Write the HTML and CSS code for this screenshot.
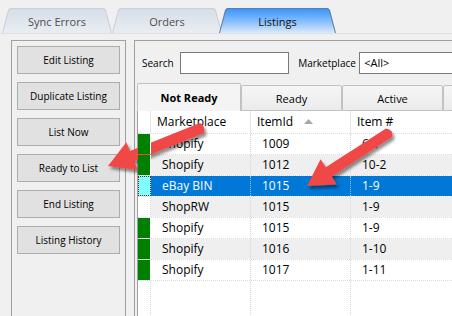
FILE: index.html
```html
<!DOCTYPE html>
<html lang="en">
<head>
  <meta charset="UTF-8" />
  <title>Listings</title>
  <link rel="stylesheet" href="styles.css">
</head>
<body>
  <div class="topbar">
    <div class="tab"><div class="tab-face">Sync Errors</div></div>
    <div class="tab"><div class="tab-face">Orders</div></div>
    <div class="tab active"><div class="tab-face">Listings</div></div>
  </div>

  <div class="main">
    <div class="actions">
      <button>Edit Listing</button>
      <button>Duplicate Listing</button>
      <button>List Now</button>
      <button>Ready to List</button>
      <button>End Listing</button>
      <button>Listing History</button>
    </div>

    <div class="group">
      <div class="filters">
        <label class="lbl-search">Search</label>
        <input type="text" class="search" />
        <label class="lbl-market">Marketplace</label>
        <div class="select">&lt;All&gt;</div>
      </div>

      <div class="subtabs">
        <div class="subtab selected">Not Ready</div>
        <div class="subtab">Ready</div>
        <div class="subtab">Active</div>
        <div class="subtab"></div>
      </div>

      <div class="grid">
        <div class="row head">
          <div class="cell ind"></div>
          <div class="cell">Marketplace</div>
          <div class="cell">ItemId <svg class="sort" width="9" height="5" viewBox="0 0 9 5"><path d="M0 5 L4.5 0 L9 5 Z" fill="#a8a8a8"/></svg></div>
          <div class="cell">Item #</div>
        </div>
        <div class="row">
          <div class="cell ind green"></div>
          <div class="cell">Shopify</div>
          <div class="cell">1009</div>
          <div class="cell">6-1</div>
        </div>
        <div class="row alt">
          <div class="cell ind green"></div>
          <div class="cell">Shopify</div>
          <div class="cell">1012</div>
          <div class="cell">10-2</div>
        </div>
        <div class="row sel">
          <div class="cell ind focus"></div>
          <div class="cell">eBay BIN</div>
          <div class="cell">1015</div>
          <div class="cell">1-9</div>
        </div>
        <div class="row alt">
          <div class="cell ind blank"></div>
          <div class="cell">ShopRW</div>
          <div class="cell">1015</div>
          <div class="cell">1-9</div>
        </div>
        <div class="row">
          <div class="cell ind green"></div>
          <div class="cell">Shopify</div>
          <div class="cell">1015</div>
          <div class="cell">1-9</div>
        </div>
        <div class="row alt">
          <div class="cell ind green"></div>
          <div class="cell">Shopify</div>
          <div class="cell">1016</div>
          <div class="cell">1-10</div>
        </div>
        <div class="row">
          <div class="cell ind green"></div>
          <div class="cell">Shopify</div>
          <div class="cell">1017</div>
          <div class="cell">1-11</div>
        </div>
        <div class="row filler">
          <div class="cell ind"></div>
          <div class="cell"></div>
          <div class="cell"></div>
          <div class="cell"></div>
        </div>
      </div>
    </div>
  </div>

  <!-- annotation arrows -->
  <svg class="arrows" width="452" height="316" viewBox="0 0 452 316">
    <defs>
      <filter id="shadow" x="-20%" y="-20%" width="140%" height="150%">
        <feDropShadow dx="2" dy="3" stdDeviation="1.8" flood-color="#000" flood-opacity="0.45"/>
      </filter>
    </defs>
    <g fill="#f04646" filter="url(#shadow)">
      <path d="M108 166 L137.8 170.1 L134.2 161.3 L204.1 133.1 Q205.5 126 199.9 122.9 L130 151.1 L126.4 142.3 Z"/>
      <path d="M307 186 L337 184.4 L331.8 176.4 L392 137 Q394 129.5 386 128.4 L325.8 167.2 L320.6 159.2 Z"/>
    </g>
  </svg>
</body>
</html>
```

FILE: styles.css
```css
body {
  margin: 0;
  width: 452px;
  height: 316px;
  overflow: hidden;
  position: relative;
  background-color: #f0f0f0;
  font-family: 'Open Sans', sans-serif;
  color: #000;
}

/* top tabs */
.topbar {
  display: flex;
  height: 25px;
  padding: 8px 0 0 2px;
  border-bottom: 1px solid #dbe1e8;
}

.tab {
  width: 110px;
  height: 25px;
  box-sizing: border-box;
  padding: 1px 1px 0;
  background-color: #c9d1db;
  clip-path: polygon(0 100%, 6px 2px, 8px 0, calc(100% - 8px) 0, calc(100% - 6px) 2px, 100% 100%);
}

.tab-face {
  height: 100%;
  display: flex;
  align-items: center;
  justify-content: center;
  font-size: 11px;
  color: #4e4e4e;
  background: linear-gradient(#d6dee9, #eaeef2);
  clip-path: polygon(0 100%, 6px 2px, 8px 0, calc(100% - 8px) 0, calc(100% - 6px) 2px, 100% 100%);
}

.tab.active {
  width: 117px;
  margin-left: -3px;
  background-color: #5d7fa6;
}

.tab.active .tab-face {
  color: #111;
  background: linear-gradient(#3a96ff, #8cc0fb 55%, #dce9f9);
}

/* body */
.main {
  display: flex;
  gap: 8px;
  padding: 6px 0 0 11px;
}

.actions {
  width: 115px;
  height: 290px;
  box-sizing: border-box;
  border: 1px solid #a0a0a0;
  padding: 5px;
  display: flex;
  flex-direction: column;
  gap: 8px;
}

.actions button {
  width: 103px;
  height: 28px;
  box-sizing: border-box;
  border: 1px solid #adadad;
  background-color: #e1e1e1;
  font-family: 'Open Sans', sans-serif;
  font-size: 10px;
  color: #000;
  padding: 0;
}

.group {
  width: 340px;
  height: 290px;
  flex-shrink: 0;
  box-sizing: border-box;
  border: 1px solid #a0a0a0;
  border-right: none;
}

.filters {
  display: flex;
  align-items: center;
  height: 22px;
  padding: 11px 0 0 7px;
  font-size: 10px;
}

.lbl-search { width: 40px; }
.lbl-market { width: 64px; }

.search {
  width: 109px;
  height: 22px;
  box-sizing: border-box;
  border: 1px solid #7a7a7a;
  margin: 0 9px 0 0;
  padding: 0;
}

.select {
  width: 120px;
  height: 22px;
  box-sizing: border-box;
  border: 1px solid #7a7a7a;
  background-color: #fff;
  padding-left: 4px;
  line-height: 20px;
  font-size: 11px;
}

.subtabs {
  display: flex;
  align-items: flex-end;
  height: 28px;
  margin: 9px 0 0 2px;
}

.subtab {
  width: 101px;
  height: 26px;
  box-sizing: border-box;
  border: 1px solid #c2c2c2;
  border-radius: 2px 2px 0 0;
  background: linear-gradient(#f6f6f6, #ebebeb);
  display: flex;
  align-items: center;
  justify-content: center;
  font-size: 11px;
  flex-shrink: 0;
}

.subtab.selected {
  width: 104px;
  height: 28px;
  border-bottom: none;
  background: #f4f4f4;
  font-weight: 700;
}

/* data grid */
.grid {
  margin-left: 2px;
  border-left: 1px solid #a0a0a0;
  background-color: #fff;
  font-size: 12px;
}

.row {
  display: grid;
  grid-template-columns: 13px 100px 100px 1fr;
  height: 21px;
  box-sizing: border-box;
  border-bottom: 1px dotted #dcdcdc;
}

.row.head {
  height: 23px;
}

.cell {
  box-sizing: border-box;
  border-right: 1px dotted #d6d6d6;
  padding-left: 11px;
  line-height: 20px;
  white-space: nowrap;
}

.row.head .cell {
  padding-left: 6px;
  line-height: 22px;
  border-right: 1px solid #e4e4e4;
}

.cell.ind { padding: 0; }

.sort {
  margin-left: 8px;
  vertical-align: 2px;
}

.row.alt .cell { background-color: #efefef; }
.row .cell.blank { background-color: #fff; }

/* status cells sit above the annotation layer, as in the capture */
.row .cell.green {
  position: relative;
  z-index: 2;
  background-color: #008000;
  border-right: 1px solid #fff;
}

.row.sel .cell {
  background-color: #0078d7;
  color: #fff;
  border-right-color: #9cc6ea;
}

.row.sel .cell.focus {
  background-color: #80ffff;
  outline: 1px dotted #7a1a1a;
  outline-offset: -1px;
  border-right-color: #d6d6d6;
}

.row.filler {
  height: 60px;
  border-bottom: none;
}

.arrows {
  position: absolute;
  top: 0;
  left: 0;
  z-index: 1;
  pointer-events: none;
}
```
